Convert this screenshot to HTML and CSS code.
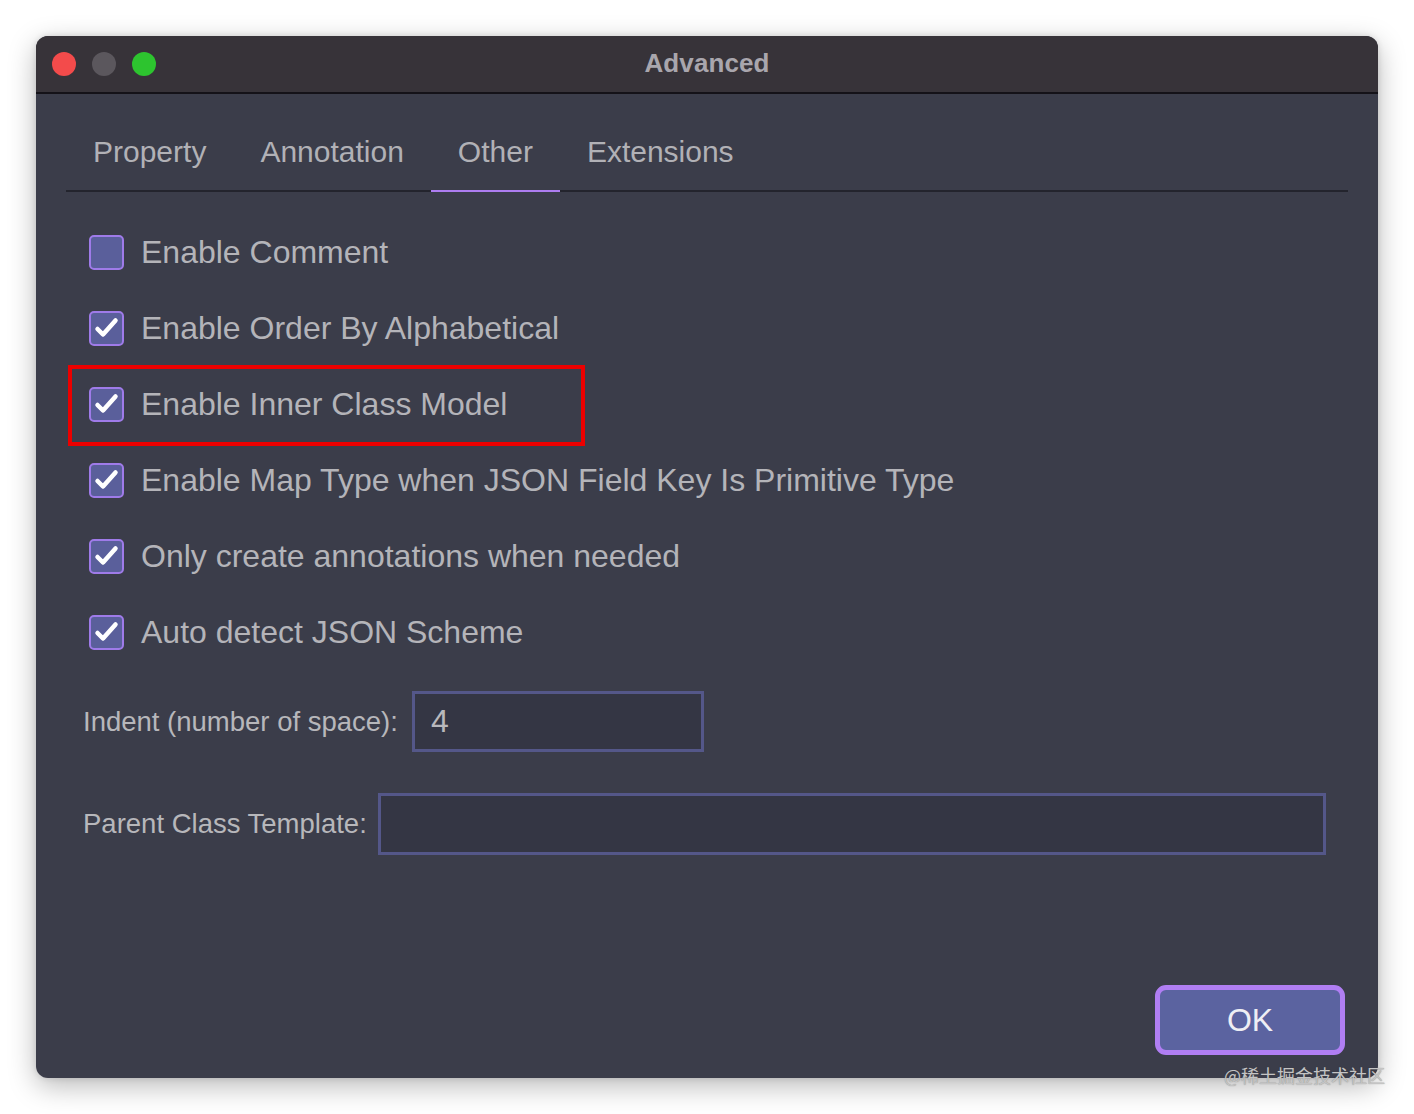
FILE: index.html
```html
<!DOCTYPE html>
<html>
<head>
<meta charset="utf-8">
<link rel="stylesheet" href="styles.css">
</head>
<body>
<div class="window">
  <div class="titlebar">
    <div class="lights">
      <span class="light red"></span>
      <span class="light gray"></span>
      <span class="light green"></span>
    </div>
    <div class="title">Advanced</div>
    <div></div>
  </div>
  <div class="content">
    <div class="tabs">
      <div class="tab">Property</div>
      <div class="tab">Annotation</div>
      <div class="tab active">Other</div>
      <div class="tab">Extensions</div>
    </div>
    <div class="options">
      <div class="row">
        <span class="box"></span>
        <span class="label">Enable Comment</span>
      </div>
      <div class="row">
        <span class="box"><svg viewBox="0 0 35 35"><path d="M8.5 18 L14 23.5 L26.5 9.5"/></svg></span>
        <span class="label">Enable Order By Alphabetical</span>
      </div>
      <div class="row">
        <span class="box"><svg viewBox="0 0 35 35"><path d="M8.5 18 L14 23.5 L26.5 9.5"/></svg></span>
        <span class="label">Enable Inner Class Model</span>
        <span class="highlight"></span>
      </div>
      <div class="row">
        <span class="box"><svg viewBox="0 0 35 35"><path d="M8.5 18 L14 23.5 L26.5 9.5"/></svg></span>
        <span class="label">Enable Map Type when JSON Field Key Is Primitive Type</span>
      </div>
      <div class="row">
        <span class="box"><svg viewBox="0 0 35 35"><path d="M8.5 18 L14 23.5 L26.5 9.5"/></svg></span>
        <span class="label">Only create annotations when needed</span>
      </div>
      <div class="row">
        <span class="box"><svg viewBox="0 0 35 35"><path d="M8.5 18 L14 23.5 L26.5 9.5"/></svg></span>
        <span class="label">Auto detect JSON Scheme</span>
      </div>
    </div>
    <div class="field indent">
      <span class="flabel">Indent (number of space):</span>
      <div class="input small">4</div>
    </div>
    <div class="field parent">
      <span class="flabel">Parent Class Template:</span>
      <div class="input wide"></div>
    </div>
    <div class="footer">
      <div class="ok">OK</div>
    </div>
  </div>
</div>
<div class="watermark">@稀土掘金技术社区</div>
</body>
</html>
```

FILE: styles.css
```css
html, body {
  margin: 0;
  padding: 0;
  background: #ffffff;
}
body {
  padding: 36px;
  font-family: "Liberation Sans", Arial, sans-serif;
  position: relative;
  width: 1342px;
  height: 1042px;
}
.window {
  width: 1342px;
  height: 1042px;
  border-radius: 12px;
  background: #3b3d4a;
  box-shadow: 0 8px 28px rgba(0, 0, 0, 0.28), 0 0 6px rgba(0, 0, 0, 0.12);
  overflow: hidden;
  display: flex;
  flex-direction: column;
}
.titlebar {
  height: 56px;
  background: #373339;
  border-bottom: 2px solid #141218;
  display: grid;
  grid-template-columns: 1fr auto 1fr;
  align-items: center;
  flex-shrink: 0;
}
.lights {
  display: flex;
  gap: 16px;
  padding-left: 16px;
}
.light {
  width: 24px;
  height: 24px;
  border-radius: 50%;
  display: block;
}
.red { background: #f34b4b; }
.gray { background: #5b575d; }
.green { background: #2dc42f; }
.title {
  font-weight: bold;
  font-size: 26px;
  color: #a9a6ad;
  letter-spacing: 0.1px;
  margin-top: -2px;
}
.content {
  flex: 1;
  display: flex;
  flex-direction: column;
}
.tabs {
  display: flex;
  margin: 0 30px;
  border-bottom: 2px solid #23242d;
}
.tab {
  font-size: 30px;
  line-height: 36px;
  color: #b1b1b6;
  padding: 40px 27px 20px;
  border-bottom: 2px solid transparent;
  margin-bottom: -2px;
}
.tab.active {
  border-bottom-color: #ad7df0;
}
.options {
  padding: 22px 0 0 53px;
  display: flex;
  flex-direction: column;
}
.row {
  height: 76px;
  display: flex;
  align-items: center;
  gap: 17px;
  position: relative;
}
.box {
  width: 35px;
  height: 35px;
  box-sizing: border-box;
  border: 2px solid #9f7be9;
  border-radius: 5px;
  background: #5a5f9b;
  display: block;
  flex-shrink: 0;
  position: relative;
}
.box svg {
  position: absolute;
  left: -2px;
  top: -2px;
  width: 35px;
  height: 35px;
}
.box svg path {
  fill: none;
  stroke: #ffffff;
  stroke-width: 4.5;
  stroke-linecap: round;
  stroke-linejoin: round;
}
.label {
  font-size: 32px;
  line-height: 38px;
  color: #b4b4b9;
}
.highlight {
  position: absolute;
  left: -21px;
  top: -1px;
  width: 517px;
  height: 81px;
  box-sizing: border-box;
  border: 4px solid #ec0000;
}
.field {
  display: flex;
  align-items: center;
  gap: 14px;
  padding-left: 47px;
}
.indent {
  margin-top: 21px;
}
.parent {
  margin-top: 41px;
  gap: 11px;
}
.flabel {
  font-size: 27.5px;
  color: #b7b7bb;
}
.input {
  box-sizing: border-box;
  border: 3px solid #545789;
  background: #343644;
  color: #b8b8bc;
  font-size: 32px;
  display: flex;
  align-items: center;
  padding-left: 16px;
}
.input.small {
  width: 292px;
  height: 61px;
}
.input.wide {
  width: 948px;
  height: 62px;
}
.footer {
  margin-top: auto;
  display: flex;
  justify-content: flex-end;
  padding: 0 33px 23px 0;
}
.ok {
  width: 190px;
  height: 70px;
  box-sizing: border-box;
  border: 5px solid #b07ef3;
  border-radius: 11px;
  background: #5b63a0;
  color: #eeeef4;
  font-size: 32px;
  display: flex;
  align-items: center;
  justify-content: center;
}
.watermark {
  position: absolute;
  left: 1224px;
  top: 1062px;
  font-family: "Noto Sans CJK SC", sans-serif;
  font-size: 18px;
  color: #c4c4c4;
  text-shadow: 0 0 1px rgba(60, 60, 60, 0.5);
  white-space: nowrap;
}
```
